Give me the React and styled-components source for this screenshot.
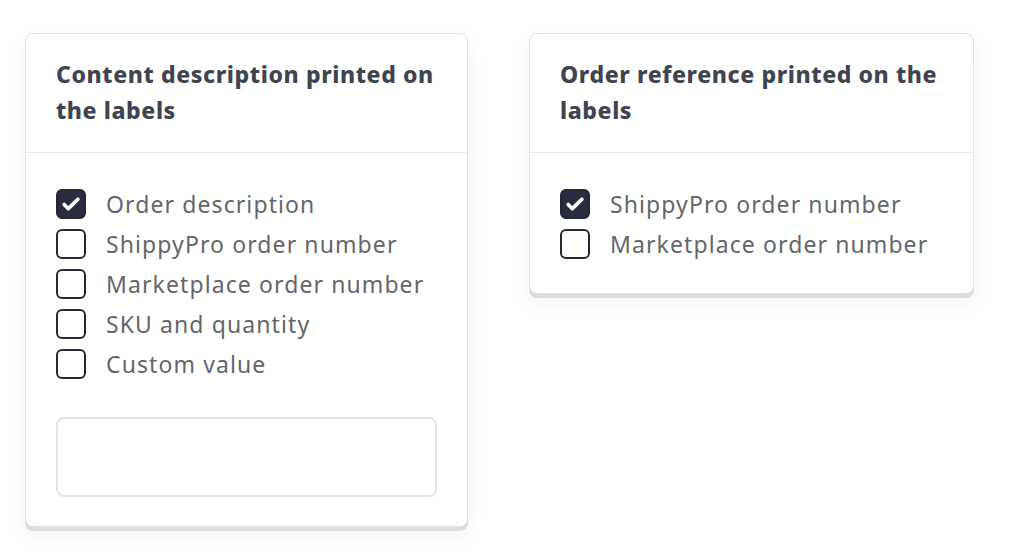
import React from "react";
import styled, { createGlobalStyle } from "styled-components";

const GlobalStyle = createGlobalStyle`
  html, body {
    margin: 0;
    padding: 0;
    background: #ffffff;
  }
  body {
    font-family: "Noto Sans", "Open Sans", sans-serif;
  }
`;

const Page = styled.div`
  display: flex;
  align-items: flex-start;
  gap: 61px;
  min-height: 560px;
  box-sizing: border-box;
  padding: 33px 0 0 25px;
`;

const Card = styled.div`
  width: ${(p) => p.width}px;
  box-sizing: border-box;
  background: #ffffff;
  border: 1px solid #e1e2e5;
  border-radius: 8px;
  box-shadow: 0 4px 0 #dcdcdd, 0 8px 18px rgba(0, 0, 0, 0.05);
`;

const CardHeader = styled.div`
  padding: 22px 30px 24px;
  border-bottom: 1px solid #e8e9eb;
`;

const Title = styled.h3`
  margin: 0;
  font-size: 23px;
  line-height: 36px;
  font-weight: 800;
  color: #3e4550;
  letter-spacing: 0.6px;
`;

const CardBody = styled.div`
  padding: 31px 30px 29px;
  display: flex;
  flex-direction: column;
`;

const Row = styled.label`
  display: flex;
  align-items: center;
  gap: 20px;
  height: 40px;
  font-size: 23px;
  letter-spacing: 1.1px;
  color: #63666b;
  cursor: pointer;
`;

const Box = styled.span`
  flex: none;
  width: 30px;
  height: 30px;
  box-sizing: border-box;
  border-radius: 6px;
  border: 2px solid #262838;
  background: ${(p) => (p.checked ? "#2b2c3f" : "#ffffff")};
  display: flex;
  align-items: center;
  justify-content: center;
`;

const TextArea = styled.div`
  margin-top: 33px;
  height: 80px;
  box-sizing: border-box;
  border: 2px solid #e3e4e8;
  border-radius: 8px;
`;

const Check = () => (
  <svg width="22" height="22" viewBox="0 0 24 24" fill="none">
    <path d="M4.5 12.5l4.6 4.6L19.5 6.8" stroke="#fff" strokeWidth="4" strokeLinecap="round" strokeLinejoin="round" />
  </svg>
);

const Option = ({ checked, children }) => (
  <Row>
    <Box checked={checked}>{checked && <Check />}</Box>
    {children}
  </Row>
);

const App = () => {
  const content = [
    { label: "Order description", checked: true },
    { label: "ShippyPro order number" },
    { label: "Marketplace order number" },
    { label: "SKU and quantity" },
    { label: "Custom value" },
  ];
  const reference = [
    { label: "ShippyPro order number", checked: true },
    { label: "Marketplace order number" },
  ];
  return (
    <React.Fragment>
      <GlobalStyle />
      <Page>
        <Card width={443}>
          <CardHeader>
            <Title>Content description printed on the labels</Title>
          </CardHeader>
          <CardBody>
            {content.map((o) => (
              <Option key={o.label} checked={o.checked}>
                {o.label}
              </Option>
            ))}
            <TextArea />
          </CardBody>
        </Card>
        <Card width={445}>
          <CardHeader>
            <Title>Order reference printed on the labels</Title>
          </CardHeader>
          <CardBody>
            {reference.map((o) => (
              <Option key={o.label} checked={o.checked}>
                {o.label}
              </Option>
            ))}
          </CardBody>
        </Card>
      </Page>
    </React.Fragment>
  );
};

export default App;
